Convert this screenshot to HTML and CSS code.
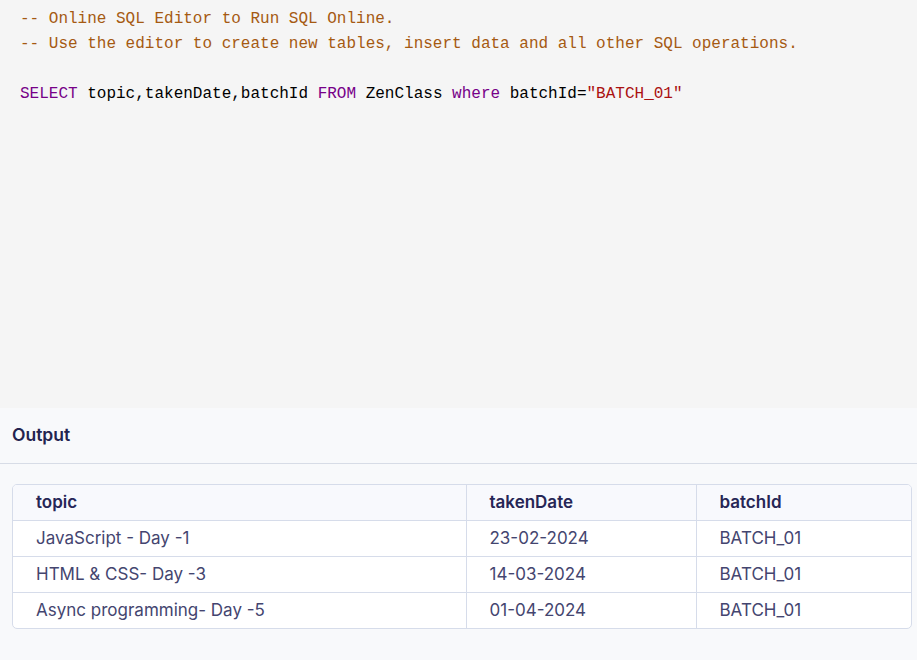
FILE: index.html
```html
<!DOCTYPE html>
<html>
<head>
<meta charset="utf-8">
<link rel="stylesheet" href="styles.css">
</head>
<body>
<div class="editor">
<pre class="code"><span class="cm">-- Online SQL Editor to Run SQL Online.</span>
<span class="cm">-- Use the editor to create new tables, insert data and all other SQL operations.</span>

<span class="kw">SELECT</span> topic,takenDate,batchId <span class="kw">FROM</span> ZenClass <span class="kw">where</span> batchId=<span class="str">"BATCH_01"</span></pre>
</div>
<section class="output">
  <div class="output-head">Output</div>
  <div class="table-wrap">
    <table class="result">
      <thead>
        <tr><th class="c1">topic</th><th class="c2">takenDate</th><th class="c3">batchId</th></tr>
      </thead>
      <tbody>
        <tr><td>JavaScript - Day -1</td><td>23-02-2024</td><td>BATCH_01</td></tr>
        <tr><td>HTML &amp; CSS- Day -3</td><td>14-03-2024</td><td>BATCH_01</td></tr>
        <tr><td>Async programming- Day -5</td><td>01-04-2024</td><td>BATCH_01</td></tr>
      </tbody>
    </table>
  </div>
</section>
</body>
</html>
```
FILE: styles.css
```css
html, body {
  margin: 0;
  padding: 0;
  height: 100%;
  background: #f8f9fb;
}
body {
  display: flex;
  flex-direction: column;
  overflow: hidden;
}
.editor {
  background: #f5f5f5;
  height: 408px;
  flex: none;
}
.code {
  margin: 0;
  padding: 7px 0 0 20px;
  font-family: "Liberation Mono", "DejaVu Sans Mono", monospace;
  font-size: 16px;
  line-height: 25px;
  color: #000;
}
.cm { color: #a55a12; }
.kw { color: #770088; }
.str { color: #aa1111; }

.output {
  flex: 1;
  background: #f8f9fb;
  font-family: Inter, "Noto Sans", sans-serif;
}
.output-head {
  height: 56px;
  box-sizing: border-box;
  padding: 16px 12px 0;
  font-size: 17.5px;
  font-weight: 600;
  color: #23234f;
  border-bottom: 1px solid #d7dce6;
}
.table-wrap {
  margin: 20px 5px 0 12px;
  border: 1px solid #d6dcea;
  border-radius: 5px;
  overflow: hidden;
  background: #fff;
}
.result {
  width: 100%;
  border-collapse: collapse;
  font-size: 17px;
}
.result th, .result td {
  height: 36px;
  box-sizing: border-box;
  padding: 0 0 0 23px;
  text-align: left;
  border-left: 1px solid #d6dcea;
  border-top: 1px solid #d6dcea;
}
.result th:first-child, .result td:first-child { border-left: none; }
.result thead th {
  border-top: none;
  background: #f8f9fd;
  font-weight: 600;
  color: #262656;
  height: 35px;
}
.result td {
  color: #44456f;
  font-weight: 400;
}
.c1 { width: 453px; }
.c2 { width: 230px; }
```
